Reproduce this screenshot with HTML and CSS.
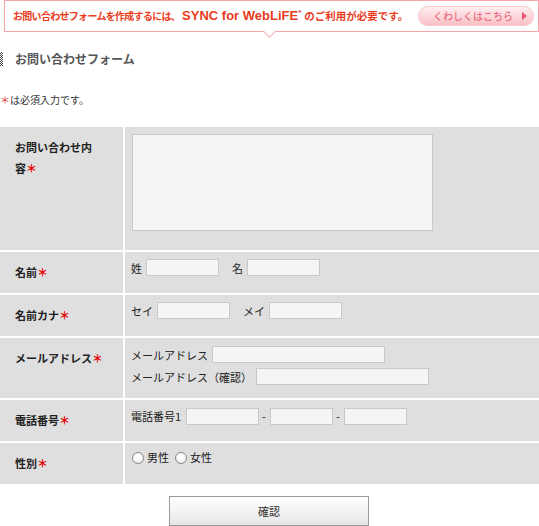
FILE: index.html
```html
<!DOCTYPE html>
<html lang="ja">
<head>
<meta charset="utf-8">
<title>お問い合わせフォーム</title>
<link rel="stylesheet" href="styles.css">
</head>
<body>
  <div class="notice">
    <p class="notice-text">
      <span class="notice-jp">お問い合わせフォームを作成するには、</span><span class="brand">SYNC for WebLiFE<sup>*</sup></span><span class="notice-jp2">のご利用が必要です。</span>
    </p>
    <a class="more" href="#">くわしくはこちら
      <svg class="more-arrow" width="5" height="8" viewBox="0 0 5 8"><path d="M0 0 L5 4 L0 8 Z" fill="#e8566e"/></svg>
    </a>
  </div>

  <h1 class="title"><span class="title-mark"></span>お問い合わせフォーム</h1>

  <p class="note"><span class="req">＊</span>は必須入力です。</p>

  <form class="form">
    <div class="label">お問い合わせ内<span class="nowrap">容<span class="req">＊</span></span></div>
    <div class="field"><textarea class="box area"></textarea></div>

    <div class="label">名前<span class="req">＊</span></div>
    <div class="field line">
      <span class="pair"><span>姓</span><input class="box w73" type="text"></span>
      <span class="pair"><span>名</span><input class="box w73" type="text"></span>
    </div>

    <div class="label">名前カナ<span class="req">＊</span></div>
    <div class="field line">
      <span class="pair"><span>セイ</span><input class="box w73" type="text"></span>
      <span class="pair"><span>メイ</span><input class="box w73" type="text"></span>
    </div>

    <div class="label"><span class="nowrap">メールアドレス<span class="req">＊</span></span></div>
    <div class="field stack">
      <span class="pair"><span>メールアドレス</span><input class="box w173" type="text"></span>
      <span class="pair"><span>メールアドレス（確認）</span><input class="box w173" type="text"></span>
    </div>

    <div class="label">電話番号<span class="req">＊</span></div>
    <div class="field line tel">
      <span>電話番号1</span><input class="box w72" type="text"><span class="dash">-</span><input class="box w63" type="text"><span class="dash">-</span><input class="box w63" type="text">
    </div>

    <div class="label">性別<span class="req">＊</span></div>
    <div class="field line radios">
      <label class="choice"><input class="radio" type="radio" name="sex">男性</label>
      <label class="choice"><input class="radio" type="radio" name="sex">女性</label>
    </div>
  </form>

  <div class="actions"><button class="submit" type="button">確認</button></div>
</body>
</html>
```

FILE: styles.css
```css
body {
  margin: 0;
  background: #fff;
  color: #222;
  font-family: "Noto Sans CJK JP", "Noto Sans", sans-serif;
}

/* top notice bar with the speech-bubble notch */
.notice {
  position: relative;
  display: flex;
  align-items: center;
  height: 30px;
  margin-left: 4px;
  width: 533px;
  border: 1px solid #f4a6a6;
  background: #fff;
  box-sizing: content-box;
}
.notice::after {
  content: "";
  position: absolute;
  left: 260px;
  bottom: -5px;
  width: 8px;
  height: 8px;
  background: #fff;
  border-right: 1px solid #f4a6a6;
  border-bottom: 1px solid #f4a6a6;
  transform: rotate(45deg);
}
.notice-text {
  margin: 0 0 0 8px;
  color: #ea3b1d;
  font-weight: bold;
  font-size: 10px;
  line-height: 14px;
  white-space: nowrap;
}
.notice-jp {
  letter-spacing: -0.7px;
}
.notice-jp2 {
  font-size: 10.5px;
}
.brand {
  font-family: "Liberation Sans", Arial, sans-serif;
  font-size: 13px;
  margin-left: 2px;
}
.brand sup {
  font-size: 8px;
  vertical-align: 5px;
  line-height: 0;
  margin-right: 3px;
}
.more {
  margin-left: auto;
  margin-right: 4px;
  display: flex;
  align-items: center;
  justify-content: space-between;
  width: 116px;
  height: 20px;
  box-sizing: border-box;
  padding: 0 7px 0 15px;
  border-radius: 10px;
  background: linear-gradient(#fff1f3, #fcd5d9 55%, #f8bcc2);
  box-shadow: inset 0 0 0 1px #f9cbd0;
  color: #e8566e;
  font-size: 10px;
  line-height: 12px;
  text-decoration: none;
}
.more-arrow {
  display: block;
}

/* page title */
.title {
  display: flex;
  align-items: center;
  gap: 12px;
  margin: 20px 0 0;
  height: 14px;
  font-size: 12px;
  line-height: 14px;
  font-weight: bold;
  color: #555;
}
.title-mark {
  width: 3px;
  height: 14px;
  background: repeating-conic-gradient(#444 0 25%, #fff 0 50%) 0 0 / 2px 2px;
}

.note {
  margin: 27px 0 0;
  font-size: 10px;
  line-height: 14px;
  color: #333;
}
.req {
  color: #e60000;
  font-weight: bold;
}
.note .req {
  color: #d84040;
  font-weight: normal;
}
.nowrap {
  white-space: nowrap;
}

/* form table */
.form {
  display: grid;
  grid-template-columns: 123px 1fr;
  grid-template-rows: 123px 41px 41px 60px 41px 41px;
  gap: 2px;
  margin-top: 20px;
  background: #fff;
}
.label {
  background: #dfdfdf;
  padding: 10px 15px 0 15px;
  font-size: 11px;
  line-height: 21px;
  font-weight: bold;
  color: #222;
}
.field {
  background: #dfdfdf;
  padding: 7px 6px;
  font-size: 11px;
  color: #222;
}
.field.line {
  display: flex;
  align-items: flex-start;
}
.pair {
  display: flex;
  align-items: center;
  gap: 4px;
  height: 17px;
}
.pair + .pair {
  margin-left: 13px;
}
.stack {
  display: flex;
  flex-direction: column;
  gap: 5px;
  padding-top: 8px;
}
.stack .pair {
  margin-left: 0;
}
.box {
  box-sizing: border-box;
  height: 17px;
  margin: 0;
  border: 1px solid #c9c9c9;
  background: #f5f5f5;
  font: inherit;
}
.area {
  display: block;
  width: 301px;
  height: 97px;
  margin-left: 1px;
  resize: none;
}
.w73 { width: 73px; }
.w173 { width: 173px; }
.w72 { width: 73px; }
.w63 { width: 63px; }

.tel {
  padding-top: 8px;
  line-height: 17px;
}
.tel > span:first-child {
  margin-right: 5px;
}
.dash {
  margin: 0 4px 0 3px;
}

.radios {
  padding-top: 6px;
  line-height: 17px;
}
.choice {
  display: flex;
  align-items: center;
  gap: 3px;
  margin-right: 5px;
}
.radio {
  appearance: none;
  -webkit-appearance: none;
  width: 12px;
  height: 12px;
  margin: 0 0 0 1px;
  border: 1px solid #8a8a8a;
  border-radius: 50%;
  background: radial-gradient(circle at 50% 35%, #fff 30%, #e2e2e2 100%);
  box-sizing: border-box;
}

/* submit */
.actions {
  display: flex;
  justify-content: center;
  margin-top: 12px;
}
.submit {
  width: 200px;
  height: 30px;
  margin-left: -1px;
  border: 1px solid #9a9a9a;
  background: linear-gradient(#ffffff, #f3f3f3 50%, #e6e6e6);
  font-family: "Noto Sans CJK JP", sans-serif;
  font-size: 11px;
  color: #333;
}
```
